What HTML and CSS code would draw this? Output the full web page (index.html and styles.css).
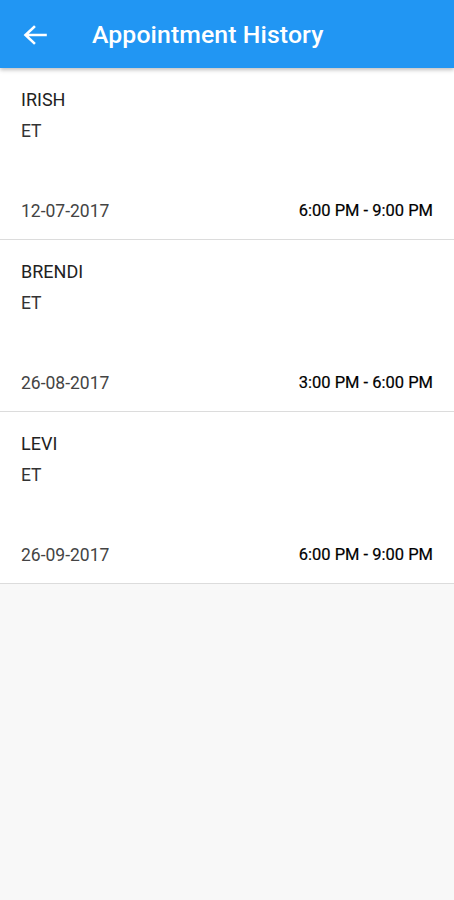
FILE: index.html
```html
<!DOCTYPE html>
<html>
<head>
<meta charset="utf-8">
<link rel="stylesheet" href="styles.css">
</head>
<body>
<header class="appbar">
  <svg class="back" width="24" height="20" viewBox="0 0 24 20"><path d="M22.5 10H3M11 2L2.5 10L11 18" fill="none" stroke="#fff" stroke-width="2.6" stroke-linecap="square"/></svg>
  <h1 class="title">Appointment History</h1>
</header>
<main class="list">
  <div class="card">
    <div class="name">IRISH</div>
    <div class="sub">ET</div>
    <div class="row"><span class="date">12-07-2017</span><span class="time">6:00 PM - 9:00 PM</span></div>
  </div>
  <div class="card">
    <div class="name">BRENDI</div>
    <div class="sub">ET</div>
    <div class="row"><span class="date">26-08-2017</span><span class="time">3:00 PM - 6:00 PM</span></div>
  </div>
  <div class="card">
    <div class="name">LEVI</div>
    <div class="sub">ET</div>
    <div class="row"><span class="date">26-09-2017</span><span class="time">6:00 PM - 9:00 PM</span></div>
  </div>
</main>
</body>
</html>
```
FILE: styles.css
```css
html, body {
  margin: 0;
  padding: 0;
  background: #f8f8f8;
  font-family: Roboto, "Noto Sans", sans-serif;
}
.appbar {
  position: relative;
  z-index: 2;
  height: 68px;
  background: #2196f3;
  display: flex;
  align-items: center;
  box-shadow: 0 2px 4px rgba(0,0,0,0.25);
}
.back {
  margin-left: 23px;
  margin-top: 2px;
  width: 24px;
  height: 20px;
}
.title {
  margin: 0 0 0 45px;
  color: #fff;
  font-size: 24.8px;
  font-weight: 500;
  letter-spacing: 0.1px;
}
.list {
  background: #f8f8f8;
}
.card {
  background: #fff;
  padding: 22px 21px 18px 21px;
  border-bottom: 1px solid #dcdcdc;
}
.name {
  font-size: 18px;
  line-height: 20px;
  color: #222;
}
.sub {
  margin-top: 11px;
  font-size: 17.5px;
  line-height: 20px;
  color: #333;
}
.row {
  margin-top: 60px;
  display: flex;
  justify-content: space-between;
  align-items: center;
  line-height: 20px;
}
.date {
  font-size: 17.5px;
  color: #444;
}
.time {
  font-size: 16.5px;
  color: #000;
  font-weight: 400;
  -webkit-text-stroke: 0.2px #000;
}
```
